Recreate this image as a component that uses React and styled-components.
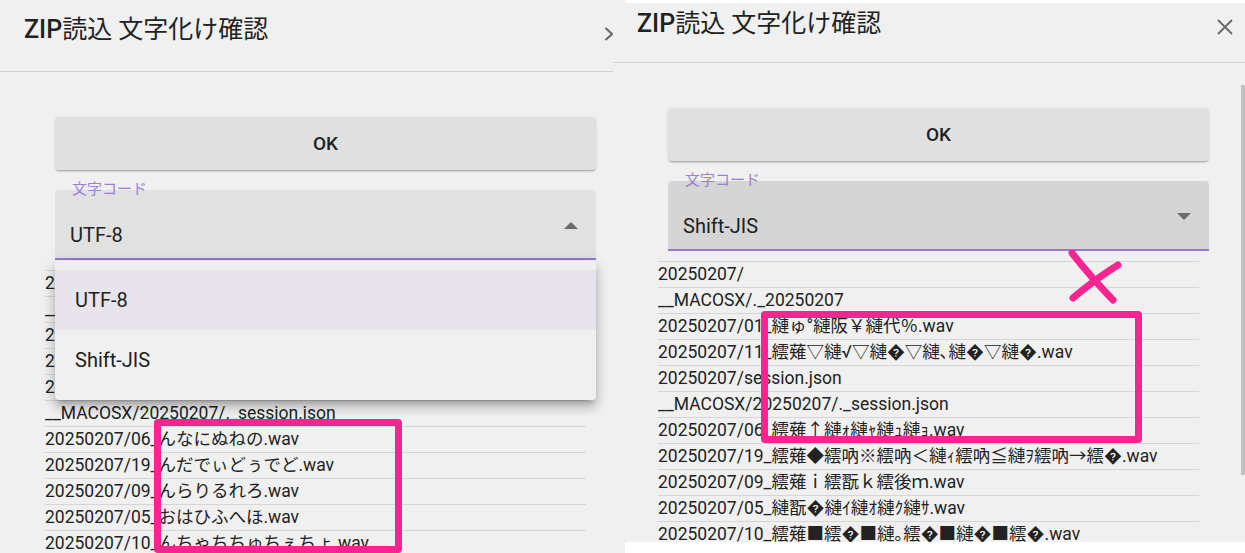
import React from "react";
import styled, { createGlobalStyle } from "styled-components";

const Global = createGlobalStyle`
  html, body { margin: 0; padding: 0; background: #f0f0f0; overflow: hidden; }
  body {
    font-family: Roboto, "Noto Sans CJK JP", "DejaVu Sans", sans-serif;
    color: #212121;
  }
  #root { width: 1245px; height: 553px; }
`;

const Page = styled.div`
  position: relative;
  display: flex;
  width: 1245px;
  height: 553px;
  overflow: hidden;
  background: #f0f0f0;
`;

const Panel = styled.section`
  position: relative;
  flex: 0 0 ${(p) => p.$width}px;
  height: 553px;
  display: flex;
  flex-direction: column;
  overflow: hidden;
  background: #f0f0f0;
`;

const EdgeStrip = styled.div`
  flex: 0 0 ${(p) => p.$h}px;
  margin-left: 12px;
  background: #ffffff;
`;

const Dialog = styled.div`
  flex: 1 1 auto;
  width: 632px;
  min-height: 0;
  display: flex;
  flex-direction: column;
  overflow: hidden;
`;

const Header = styled.header`
  flex: 0 0 ${(p) => p.$h}px;
  box-sizing: border-box;
  display: flex;
  align-items: flex-start;
  padding: ${(p) => p.$pt}px 11px 0 24px;
  border-bottom: 1px solid #d2d2d2;
`;

const Title = styled.h2`
  flex: 1;
  margin: 0;
  font-size: 25px;
  line-height: 28px;
  font-weight: 400;
  color: #222;
  letter-spacing: 0;
`;

const TitleLatin = styled.span`
  font-weight: 500;
`;

const IconBox = styled.span`
  flex: 0 0 18px;
  height: 16px;
  margin-top: ${(p) => p.$mt}px;
  display: flex;
  align-items: center;
  justify-content: flex-start;
  color: #6a6a6a;
`;

const Content = styled.div`
  flex: 1 1 auto;
  min-height: 0;
  padding: 45px 0 0 55px;
  display: flex;
  flex-direction: column;
`;

const OkButton = styled.button`
  width: 541px;
  height: 53px;
  flex: 0 0 53px;
  border: none;
  border-radius: 4px;
  background: #e0e0e0;
  box-shadow: 0 2px 2px -1px rgba(0, 0, 0, 0.28), 0 1px 3px rgba(0, 0, 0, 0.1);
  font-family: Roboto, sans-serif;
  font-size: 19px;
  font-weight: 500;
  color: #222;
  cursor: pointer;
`;

const FieldWrap = styled.div`
  position: relative;
  width: 541px;
  margin-top: 20px;
`;

const FieldLabel = styled.span`
  position: absolute;
  left: 17px;
  top: -10px;
  font-size: 15px;
  line-height: 18px;
  color: #9b80cf;
  z-index: 1;
`;

const SelectBox = styled.div`
  box-sizing: border-box;
  height: 70px;
  display: flex;
  align-items: flex-start;
  justify-content: space-between;
  padding: 32px 18px 0 15px;
  background: ${(p) => (p.$hover ? "#d5d5d5" : "#e1e1e1")};
  border-radius: 4px 4px 0 0;
  border-bottom: 2px solid #9679ce;
`;

const SelectValue = styled.span`
  font-size: 20px;
  line-height: 26px;
  color: #212121;
`;

const Menu = styled.ul`
  position: absolute;
  top: calc(100% + 1px);
  left: 0;
  right: 0;
  margin: 0;
  padding: 9px 0 10px;
  list-style: none;
  background: #f0f0f0;
  border-radius: 4px;
  box-shadow: 0 5px 5px -3px rgba(0, 0, 0, 0.2),
    0 8px 10px 1px rgba(0, 0, 0, 0.14), 0 3px 14px 2px rgba(0, 0, 0, 0.12);
  z-index: 10;
`;

const MenuItem = styled.li`
  height: 60px;
  line-height: 60px;
  padding-left: 20px;
  font-size: 20px;
  color: #212121;
  background: ${(p) => (p.$selected ? "#e7e5eb" : "transparent")};
`;

const FileList = styled.ul`
  width: 541px;
  margin: 10px 0 0 -10px;
  padding: 0;
  list-style: none;
  border-top: 1px solid #d6d6d6;
`;

const FileRow = styled.li`
  height: 25px;
  line-height: 25px;
  border-bottom: 1px solid #d6d6d6;
  font-size: 17.5px;
  color: #222;
  white-space: nowrap;
  overflow: hidden;
`;

const Scrollbar = styled.div`
  position: absolute;
  right: 0;
  top: 85px;
  width: 4px;
  height: 390px;
  background: #c1c1c1;
`;

const PinkBox = styled.div`
  position: absolute;
  left: ${(p) => p.$x}px;
  top: ${(p) => p.$y}px;
  width: ${(p) => p.$w}px;
  height: ${(p) => p.$h}px;
  box-sizing: border-box;
  border: 7px solid #f7258f;
  border-radius: 4px;
  pointer-events: none;
  z-index: 20;
`;

const PinkCross = styled.svg`
  position: absolute;
  left: 1064px;
  top: 248px;
  z-index: 20;
`;

const Chevron = () => (
  <svg width="12" height="16" viewBox="0 0 12 16">
    <path d="M2.5 2 L9 8 L2.5 14" fill="none" stroke="currentColor" strokeWidth="2.2" />
  </svg>
);

const CloseIcon = () => (
  <svg width="18" height="16" viewBox="0 0 18 16">
    <path d="M2 1 L16 15 M16 1 L2 15" fill="none" stroke="currentColor" strokeWidth="1.9" />
  </svg>
);

const Arrow = ({ up }) => (
  <svg width="14" height="7" viewBox="0 0 14 7">
    <polygon points={up ? "0,7 14,7 7,0" : "0,0 14,0 7,7"} fill="#6b6b6b" />
  </svg>
);

const leftFiles = [
  "20250207/",
  "__MACOSX/._20250207",
  "20250207/01_あかきくけこ.wav",
  "20250207/11_んつぁつぃつつぇつぉ.wav",
  "20250207/session.json",
  "__MACOSX/20250207/._session.json",
  "20250207/06_んなにぬねの.wav",
  "20250207/19_んだでぃどぅでど.wav",
  "20250207/09_んらりるれろ.wav",
  "20250207/05_おはひふへほ.wav",
  "20250207/10_んちゃちちゅちぇちょ.wav",
];

const rightFiles = [
  "20250207/",
  "__MACOSX/._20250207",
  "20250207/01_縺ゅ°縺阪￥縺代％.wav",
  "20250207/11_繧薙▽縺√▽縺\uFFFD▽縺､縺\uFFFD▽縺\uFFFD.wav",
  "20250207/session.json",
  "__MACOSX/20250207/._session.json",
  "20250207/06_繧薙↑縺ｫ縺ｬ縺ｭ縺ｮ.wav",
  "20250207/19_繧薙◆繧吶※繧吶＜縺ｨ繧吶≦縺ｦ繧吶→繧\uFFFD.wav",
  "20250207/09_繧薙ｉ繧翫ｋ繧後ｍ.wav",
  "20250207/05_縺翫\uFFFD縺ｲ縺ｵ縺ｸ縺ｻ.wav",
  "20250207/10_繧薙■繧\uFFFD■縺｡繧\uFFFD■縺\uFFFD■繧\uFFFD.wav",
];

function ZipDialog({ variant, headerH, headerPt, iconMt, value, open, hover, files }) {
  return (
    <Dialog>
      <Header $h={headerH} $pt={headerPt}>
        <Title>
          <TitleLatin>ZIP</TitleLatin>読込 文字化け確認
        </Title>
        <IconBox $mt={iconMt}>{variant === "left" ? <Chevron /> : <CloseIcon />}</IconBox>
      </Header>
      <Content>
        <OkButton>OK</OkButton>
        <FieldWrap>
          <FieldLabel>文字コード</FieldLabel>
          <SelectBox $hover={hover}>
            <SelectValue>{value}</SelectValue>
            <Arrow up={open} />
          </SelectBox>
          {open && (
            <Menu>
              <MenuItem $selected>UTF-8</MenuItem>
              <MenuItem>Shift-JIS</MenuItem>
            </Menu>
          )}
        </FieldWrap>
        <FileList>
          {files.map((f, i) => (
            <FileRow key={i}>{f}</FileRow>
          ))}
        </FileList>
      </Content>
    </Dialog>
  );
}

export default function App() {
  return (
    <>
      <Global />
      <Page>
        <Panel $width={613}>
          <ZipDialog
            variant="left"
            headerH={72}
            headerPt={16}
            iconMt={10}
            value="UTF-8"
            open
            files={leftFiles}
          />
        </Panel>
        <Panel $width={632}>
          <EdgeStrip $h={3} />
          <ZipDialog
            variant="right"
            headerH={60}
            headerPt={7}
            iconMt={9}
            value="Shift-JIS"
            hover
            files={rightFiles}
          />
          <EdgeStrip $h={11} />
          <Scrollbar />
        </Panel>
        <PinkBox $x={154} $y={419} $w={248} $h={134} />
        <PinkBox $x={761} $y={311} $w={381} $h={132} />
        <PinkCross width="62" height="58" viewBox="0 0 62 58">
          <path d="M8 5 Q26 28 49 52" fill="none" stroke="#f7258f" strokeWidth="7" strokeLinecap="round" />
          <path d="M54 17 Q30 32 9 50" fill="none" stroke="#f7258f" strokeWidth="7" strokeLinecap="round" />
        </PinkCross>
      </Page>
    </>
  );
}
